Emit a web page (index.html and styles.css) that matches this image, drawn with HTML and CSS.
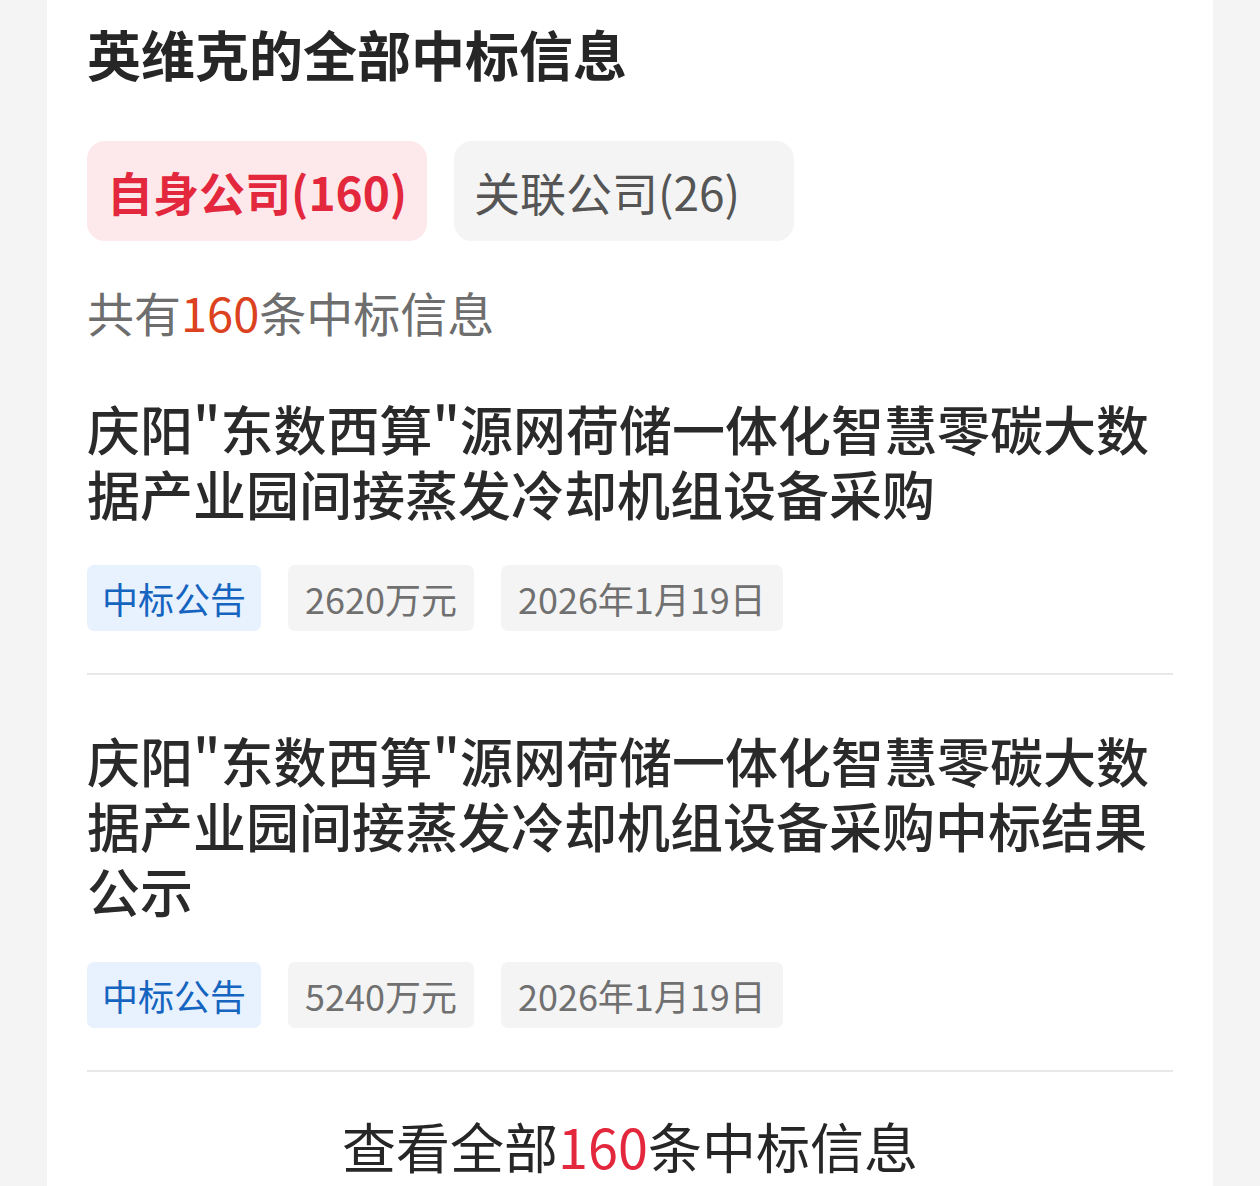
FILE: index.html
```html
<!DOCTYPE html>
<html lang="zh-CN">

<head>
    <meta charset="UTF-8">
    <meta name="viewport" content="width=device-width, initial-scale=1.0">
    <title>英维克的全部中标信息</title>
    <link rel="stylesheet" href="styles.css">
</head>

<body>
    <div class="card">
        <h1 class="card-title">英维克的全部中标信息</h1>

        <div class="tabs">
            <div class="tab active">自身公司(160)</div>
            <div class="tab">关联公司(26)</div>
        </div>

        <div class="summary">共有<span class="num">160</span>条中标信息</div>

        <div class="bid-item">
            <div class="bid-title">庆阳"东数西算"源网荷储一体化智慧零碳大数据产业园间接蒸发冷却机组设备采购</div>
            <div class="bid-tags">
                <span class="tag tag-type">中标公告</span>
                <span class="tag">2620万元</span>
                <span class="tag">2026年1月19日</span>
            </div>
        </div>

        <div class="bid-item">
            <div class="bid-title">庆阳"东数西算"源网荷储一体化智慧零碳大数据产业园间接蒸发冷却机组设备采购中标结果公示</div>
            <div class="bid-tags">
                <span class="tag tag-type">中标公告</span>
                <span class="tag">5240万元</span>
                <span class="tag">2026年1月19日</span>
            </div>
        </div>

        <div class="view-all">查看全部<span class="num">160</span>条中标信息</div>
    </div>
</body>

</html>
```

FILE: styles.css
```css
body {
    margin: 0;
    background-color: #f4f4f4;
    font-family: "Noto Sans CJK SC", "Noto Sans", sans-serif;
    color: #2a2a2a;
}

.card {
    margin: 0 47px;
    padding: 19px 40px 0;
    min-height: 1186px;
    box-sizing: border-box;
    background-color: #fff;
}

.card-title {
    margin: 0;
    font-size: 54px;
    line-height: 70px;
    font-weight: 700;
    color: #262626;
}

.tabs {
    display: flex;
    gap: 27px;
    margin-top: 52px;
}

.tab {
    width: 340px;
    height: 100px;
    box-sizing: border-box;
    padding-left: 20px;
    display: flex;
    align-items: center;
    border-radius: 18px;
    background-color: #f4f4f4;
    color: #555;
    font-size: 46px;
}

.tab.active {
    background-color: #fde9eb;
    color: #e3283e;
    font-weight: 700;
}

.summary {
    margin-top: 41px;
    font-size: 47px;
    line-height: 60px;
    color: #6e6e6e;
}

.summary .num {
    color: #dc4120;
}

.bid-item {
    padding: 54px 0 42px;
    border-bottom: 2px solid #e8e8e8;
}

.bid-item + .bid-item {
    padding-top: 53px;
}

.bid-title {
    font-size: 53px;
    line-height: 65px;
    font-weight: 500;
}

.bid-tags {
    display: flex;
    gap: 27px;
    margin-top: 39px;
}

.tag {
    height: 66px;
    padding: 0 17px;
    display: flex;
    align-items: center;
    border-radius: 7px;
    background-color: #f4f4f4;
    color: #707070;
    font-size: 36px;
}

.tag-type {
    padding: 0 15px;
    background-color: #e8f1fe;
    color: #1565c0;
}

.view-all {
    margin-top: 40px;
    text-align: center;
    font-size: 54px;
    line-height: 68px;
    color: #262626;
}

.view-all .num {
    color: #e3283e;
}
```
